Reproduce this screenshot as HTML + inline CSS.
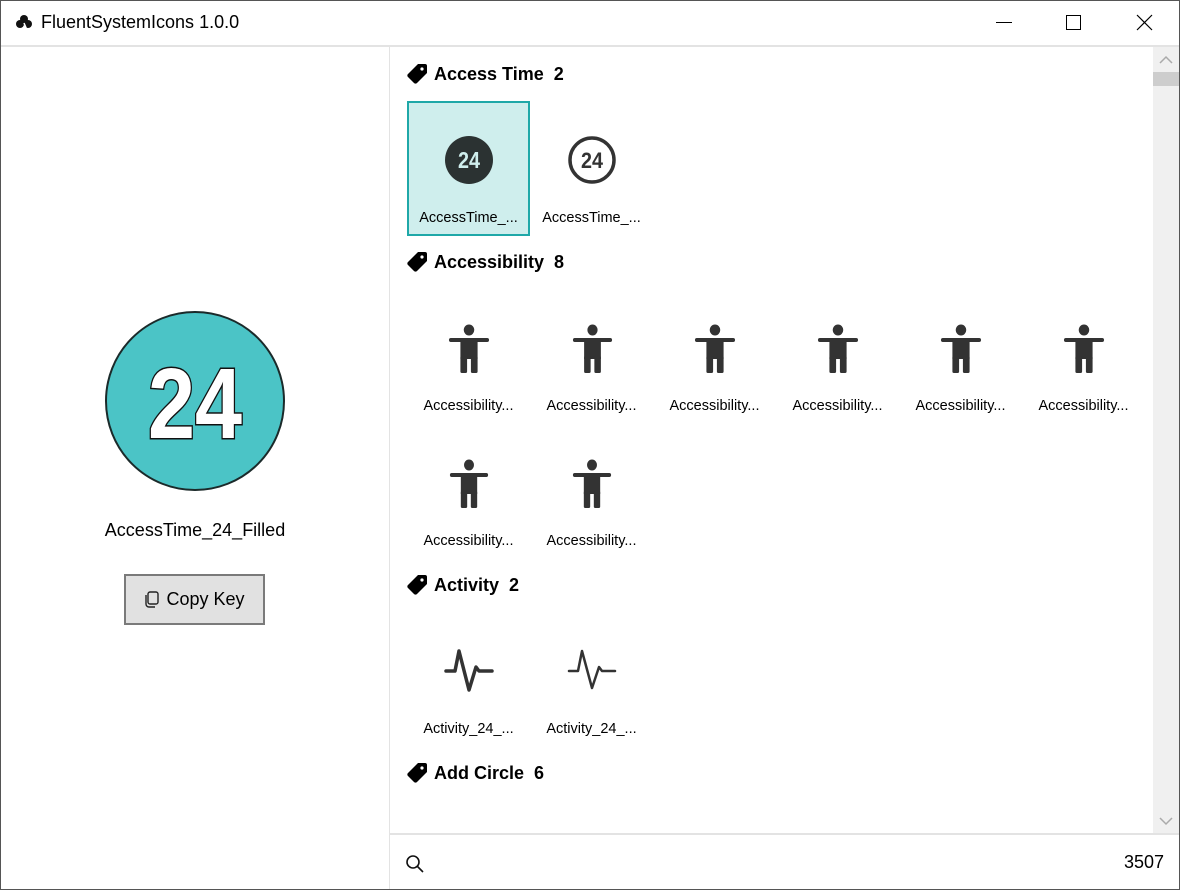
<!DOCTYPE html>
<html><head><meta charset="utf-8"><style>
*{margin:0;padding:0;box-sizing:border-box}
body{width:1180px;height:890px;overflow:hidden;background:#fff;font-family:"Segoe UI","Liberation Sans",sans-serif;color:#000;position:relative}
.a{position:absolute}
.lbl{position:absolute;width:123px;text-align:center;font-size:14.5px;white-space:nowrap}
.hd{position:absolute;left:406px;font-size:18px;font-weight:bold;display:flex;align-items:center;gap:6px}
</style></head><body>
<div class="a" style="left:0;top:0;width:1180px;height:890px;border:1px solid #555"></div>
<svg class="a" style="left:16px;top:14px" width="17" height="17" viewBox="0 0 17 17"><circle cx="8" cy="5" r="4" fill="#111"/><circle cx="4" cy="10" r="4" fill="#111"/><circle cx="12" cy="10" r="4" fill="#111"/><path d="M8 9 L11 16" stroke="#fff" stroke-width="1.5"/></svg>
<div class="a" style="left:41px;top:12px;font-size:18px">FluentSystemIcons 1.0.0</div>
<div class="a" style="left:996px;top:22px;width:16px;height:1px;background:#000"></div>
<div class="a" style="left:1066px;top:15px;width:15px;height:15px;border:1px solid #000"></div>
<svg class="a" style="left:1136px;top:14px" width="17" height="17"><path d="M1 1L16 16M16 1L1 16" stroke="#000" stroke-width="1.2"/></svg>
<div class="a" style="left:1px;top:45px;width:1178px;height:2px;background:#e3e3e3"></div>
<div class="a" style="left:389px;top:47px;width:1px;height:842px;background:#e3e3e3"></div>
<svg class="a" style="left:104px;top:310px" width="182" height="182"><circle cx="91" cy="91" r="89" fill="#4bc4c6" stroke="#1b2a2a" stroke-width="2"/>
<text x="44" y="128" textLength="94" lengthAdjust="spacingAndGlyphs" font-family="Liberation Sans" font-weight="bold" font-size="100" fill="#fff" stroke="#111" stroke-width="3" paint-order="stroke">24</text></svg>
<div class="a" style="left:0;width:390px;top:520px;text-align:center;font-size:18px">AccessTime_24_Filled</div>
<div class="a" style="left:124px;top:574px;width:141px;height:51px;background:#e1e1e1;border:2px solid #7a7a7a;font-size:18px;display:flex;align-items:center;justify-content:center;gap:6px">
<svg width="16" height="17"><rect x="4" y="1" width="10" height="12" rx="2" fill="none" stroke="#222" stroke-width="1.4"/><path d="M2 4v9a3 3 0 0 0 3 3h6" fill="none" stroke="#222" stroke-width="1.4"/></svg>Copy Key</div>
<div class="a" style="left:1153px;top:47px;width:26px;height:787px;background:#f0f0f0"></div>
<div class="a" style="left:1153px;top:72px;width:26px;height:14px;background:#cdcdcd"></div>
<svg class="a" style="left:1158px;top:55px" width="16" height="10"><path d="M2 8L8 2L14 8" fill="none" stroke="#aaa" stroke-width="1.5"/></svg>
<svg class="a" style="left:1158px;top:816px" width="16" height="10"><path d="M2 2L8 8L14 2" fill="none" stroke="#aaa" stroke-width="1.5"/></svg>
<svg width="0" height="0" style="position:absolute"><defs>
<symbol id="tag" viewBox="0 0 22 22"><path d="M12 1h7a2 2 0 0 1 2 2v7l-10 10a2 2 0 0 1-3 0L2 14a2 2 0 0 1 0-3z" fill="#000"/><circle cx="16" cy="6" r="1.6" fill="#fff"/></symbol>
<symbol id="p" viewBox="0 0 44 50" preserveAspectRatio="none"><circle cx="22" cy="7" r="5.5" fill="#333"/><rect x="1" y="15" width="42" height="4" rx="2" fill="#333"/><rect x="13" y="16" width="18" height="20" fill="#333"/><rect x="13" y="33" width="7" height="17" rx="1.5" fill="#333"/><rect x="24" y="33" width="7" height="17" rx="1.5" fill="#333"/></symbol>
</defs></svg>
<div class="hd" style="top:63px"><svg width="22" height="22"><use href="#tag"/></svg>Access Time&nbsp; 2</div>
<div class="hd" style="top:251px"><svg width="22" height="22"><use href="#tag"/></svg>Accessibility&nbsp; 8</div>
<div class="hd" style="top:574px"><svg width="22" height="22"><use href="#tag"/></svg>Activity&nbsp; 2</div>
<div class="hd" style="top:762px"><svg width="22" height="22"><use href="#tag"/></svg>Add Circle&nbsp; 6</div>
<div class="a" style="left:407px;top:101px;width:123px;height:135px;background:#cfeeed;border:2px solid #1fa8a8"></div>
<svg class="a" style="left:444px;top:135px" width="50" height="50"><circle cx="25" cy="25" r="24" fill="#2b3232"/><text x="14" y="33" textLength="22" lengthAdjust="spacingAndGlyphs" font-family="Liberation Sans" font-weight="bold" font-size="23" fill="#cfeeed">24</text></svg>
<svg class="a" style="left:567px;top:135px" width="50" height="50"><circle cx="25" cy="25" r="22" fill="none" stroke="#333" stroke-width="3.5"/><text x="14" y="33" textLength="22" lengthAdjust="spacingAndGlyphs" font-family="Liberation Sans" font-weight="bold" font-size="22" fill="#333">24</text></svg>
<div class="lbl" style="left:407px;top:210px">AccessTime_...</div>
<div class="lbl" style="left:530px;top:210px">AccessTime_...</div>
<svg class="a" style="left:448px;top:323px" width="42" height="50"><use href="#p"/></svg>
<svg class="a" style="left:572px;top:323px" width="41" height="50"><use href="#p"/></svg>
<svg class="a" style="left:694px;top:323px" width="42" height="50"><use href="#p"/></svg>
<svg class="a" style="left:817px;top:323px" width="42" height="50"><use href="#p"/></svg>
<svg class="a" style="left:940px;top:323px" width="42" height="50"><use href="#p"/></svg>
<svg class="a" style="left:1063px;top:323px" width="42" height="50"><use href="#p"/></svg>
<svg class="a" style="left:449px;top:458px" width="40" height="50"><use href="#p"/></svg>
<svg class="a" style="left:572px;top:458px" width="40" height="50"><use href="#p"/></svg>
<div class="lbl" style="left:407px;top:398px">Accessibility...</div>
<div class="lbl" style="left:530px;top:398px">Accessibility...</div>
<div class="lbl" style="left:653px;top:398px">Accessibility...</div>
<div class="lbl" style="left:776px;top:398px">Accessibility...</div>
<div class="lbl" style="left:899px;top:398px">Accessibility...</div>
<div class="lbl" style="left:1022px;top:398px">Accessibility...</div>
<div class="lbl" style="left:407px;top:533px">Accessibility...</div>
<div class="lbl" style="left:530px;top:533px">Accessibility...</div>
<svg class="a" style="left:444px;top:647px" width="50" height="48"><path d="M2 24H11L15 4L25 43L32 20L35 24H48" fill="none" stroke="#333" stroke-width="3.5" stroke-linecap="round" stroke-linejoin="round"/></svg>
<svg class="a" style="left:567px;top:647px" width="50" height="48"><path d="M2 24H11L15 4L25 41L32 20L35 24H48" fill="none" stroke="#333" stroke-width="2.5" stroke-linecap="round" stroke-linejoin="round"/></svg>
<div class="lbl" style="left:407px;top:721px">Activity_24_...</div>
<div class="lbl" style="left:530px;top:721px">Activity_24_...</div>
<div class="a" style="left:390px;top:833px;width:789px;height:2px;background:#e3e3e3"></div>
<svg class="a" style="left:405px;top:854px" width="20" height="20"><circle cx="8" cy="8" r="6" fill="none" stroke="#111" stroke-width="1.6"/><path d="M12.5 12.5L18 18" stroke="#111" stroke-width="1.6"/></svg>
<div class="a" style="left:1100px;top:852px;width:64px;text-align:right;font-size:18px">3507</div>
</body></html>
